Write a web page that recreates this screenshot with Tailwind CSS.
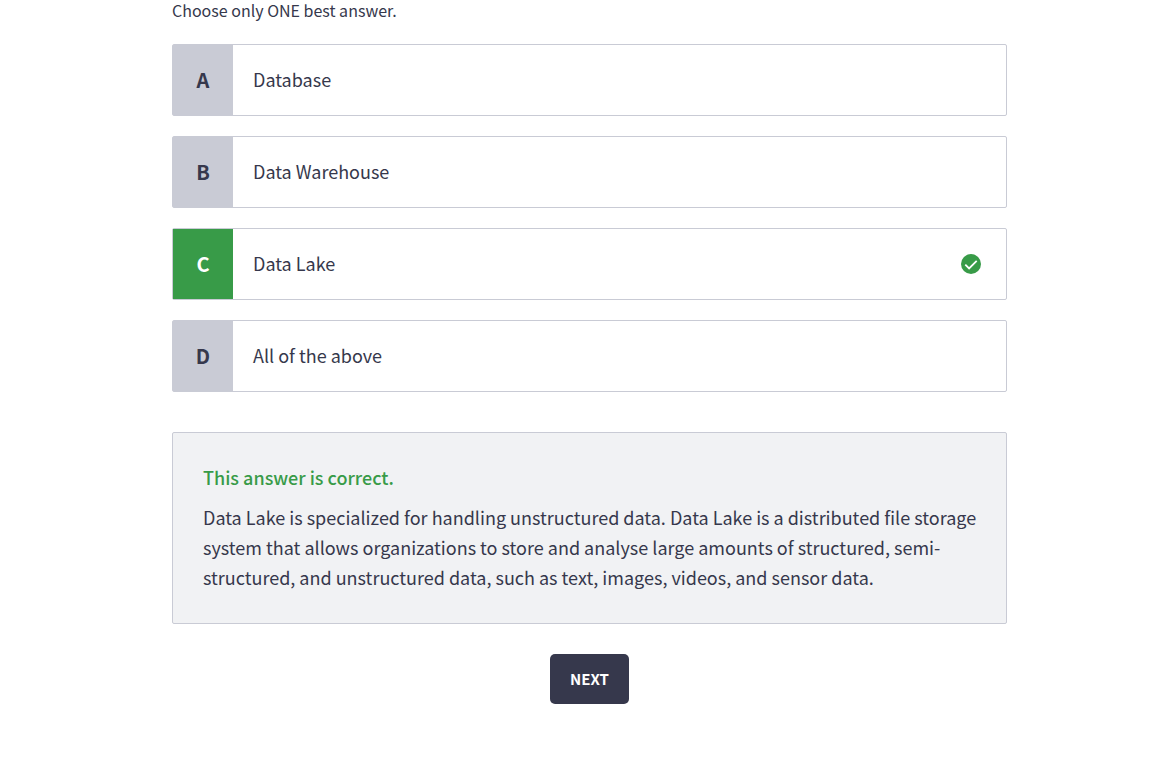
<!DOCTYPE html>
<html lang="en">
<head>
<meta charset="utf-8">
<meta name="viewport" content="width=device-width, initial-scale=1">
<title>Quiz</title>
<script src="https://cdn.jsdelivr.net/npm/@tailwindcss/browser@4"></script>
</head>
<body class="bg-white pl-4 text-[#36384c] font-['Noto_Sans_CJK_SC',sans-serif]">
<main class="mx-auto max-w-[835px]">
  <form>
    <fieldset>
      <legend class="text-base leading-5">Choose only ONE best answer.</legend>
      <div class="mt-6 flex flex-col gap-5">
        <label class="flex h-[72px] items-stretch rounded-xs border border-[#c9cbd5] text-lg">
          <input type="radio" name="answer" value="A" class="sr-only">
          <span class="flex w-[60px] items-center justify-center bg-[#c9cbd5] text-xl font-bold">A</span>
          <span class="flex flex-1 items-center px-5 pb-0.5">Database</span>
        </label>
        <label class="flex h-[72px] items-stretch rounded-xs border border-[#c9cbd5] text-lg">
          <input type="radio" name="answer" value="B" class="sr-only">
          <span class="flex w-[60px] items-center justify-center bg-[#c9cbd5] text-xl font-bold">B</span>
          <span class="flex flex-1 items-center px-5 pb-0.5">Data Warehouse</span>
        </label>
        <label class="flex h-[72px] items-stretch rounded-xs border border-[#c9cbd5] text-lg">
          <input type="radio" name="answer" value="C" class="sr-only" checked>
          <span class="flex w-[60px] items-center justify-center bg-[#389b48] text-xl font-bold text-white">C</span>
          <span class="flex flex-1 items-center px-5 pb-0.5">Data Lake</span>
          <svg class="mr-[25px] size-5 self-center" viewBox="0 0 20 20" fill="none" aria-hidden="true"><circle cx="10" cy="10" r="10" fill="#389b48"/><path d="M4.3 10.6l3.8 3.8 7.6-7.6" stroke="#fff" stroke-width="1.8"/></svg>
        </label>
        <label class="flex h-[72px] items-stretch rounded-xs border border-[#c9cbd5] text-lg">
          <input type="radio" name="answer" value="D" class="sr-only">
          <span class="flex w-[60px] items-center justify-center bg-[#c9cbd5] text-xl font-bold">D</span>
          <span class="flex flex-1 items-center px-5 pb-0.5">All of the above</span>
        </label>
      </div>
    </fieldset>
    <section class="mt-10 rounded-xs border border-[#c9cbd5] bg-[#f1f2f4] pt-[29px] pr-6 pb-[31px] pl-[30px] text-lg leading-[30px]">
      <h2 class="font-medium text-[#389b48]">This answer is correct.</h2>
      <p class="mt-[10px]">Data Lake is specialized for handling unstructured data. Data Lake is a distributed file storage system that allows organizations to store and analyse large amounts of structured, semi-structured, and unstructured data, such as text, images, videos, and sensor data.</p>
    </section>
    <div class="mt-[30px] flex justify-center">
      <button type="button" class="h-[50px] rounded-[5px] bg-[#36384c] px-5 text-[15px] font-bold text-white">NEXT</button>
    </div>
  </form>
</main>
</body>
</html>
